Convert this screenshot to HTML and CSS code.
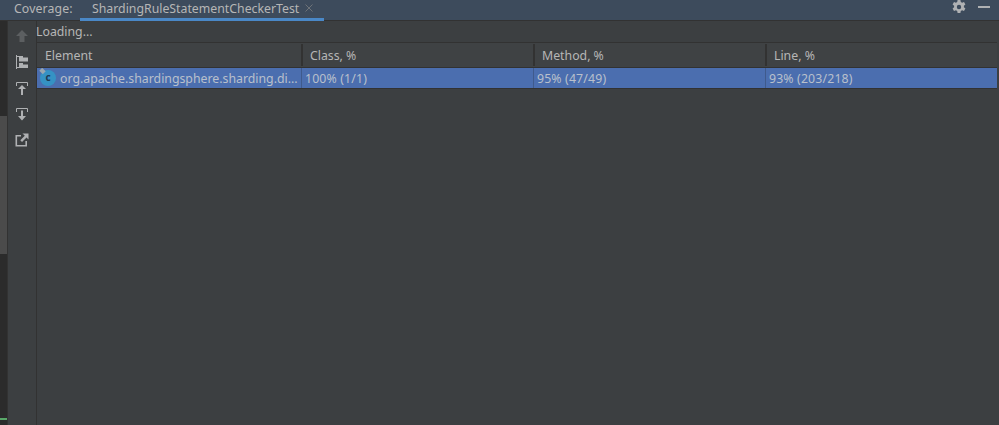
FILE: index.html
```html
<!DOCTYPE html>
<html lang="en">
<head>
  <meta charset="UTF-8" />
  <title>Coverage</title>
  <link rel="stylesheet" href="styles.css">
</head>
<body>
  <div class="tabbar">
    <span class="tool-title">Coverage:</span>
    <div class="tab">
      <span>ShardingRuleStatementCheckerTest</span>
      <svg class="tab-close" width="8" height="8" viewBox="0 0 8 8"><path d="M.5.5l7 7M7.5.5l-7 7" stroke="#6e7378" fill="none"/></svg>
    </div>
    <div class="tab-actions">
      <svg width="14" height="14" viewBox="0 0 14 14"><path fill="#afb1b3" fill-rule="evenodd" d="M5.600 0h2.800l.4 2 1.300.7 1.900-.7 1.400 2.400-1.500 1.300v1.600l1.500 1.300-1.400 2.400-1.900-.7-1.300.7-.4 2H5.600l-.4-2-1.300-.7-1.900.7L.6 8.600l1.500-1.300V5.700L.6 4.400 2 2l1.900.7 1.300-.7zM7 4.800a2.200 2.200 0 1 0 0 4.400 2.200 2.200 0 0 0 0-4.400z"/></svg>
      <span class="minimize"></span>
    </div>
  </div>
  <div class="body">
    <div class="gutter">
      <div class="thumb"></div>
      <div class="marker"></div>
    </div>
    <div class="toolbar">
      <svg width="14" height="14" viewBox="0 0 14 14"><path fill="#5c5f61" d="M7 1l6 6H9.500v6h-5V7H1z"/></svg>
      <svg width="14" height="14" viewBox="0 0 14 14"><path fill="none" stroke="#afb1b3" d="M1.500 0v14M1 1.500h3M1 12.500h3"/><path fill="#afb1b3" d="M4 1h4v1.500h5v4H4zM4 8h4v1.500h5v3.500H4z"/></svg>
      <svg width="14" height="14" viewBox="0 0 14 14"><path fill="none" stroke="#afb1b3" d="M1.500 5V1.500h11V5"/><path fill="#afb1b3" d="M7 4l4 4H8v6H6V8H3z"/></svg>
      <svg width="14" height="14" viewBox="0 0 14 14"><path fill="none" stroke="#afb1b3" d="M1.500 5V1.500h11V5"/><path fill="#afb1b3" d="M6 3.500h2V9h3l-4 4.500L3 9h3z"/></svg>
      <svg width="14" height="14" viewBox="0 0 14 14"><path fill="none" stroke="#afb1b3" stroke-width="1.600" d="M6 2.800H1.300v9.900h9.900V8"/><path fill="#afb1b3" d="M7.500.5H13.500v6l-2-2L7 9 5.300 7.300l4.500-4.500z"/></svg>
    </div>
    <div class="panel">
      <div class="status">Loading...</div>
      <div class="table">
        <div class="row head">
          <div class="cell first">Element</div>
          <div class="cell">Class, %</div>
          <div class="cell">Method, %</div>
          <div class="cell">Line, %</div>
        </div>
        <div class="row selected">
          <div class="cell first">
            <span class="class-icon">c</span>
            <span>org.apache.shardingsphere.sharding.di...</span>
          </div>
          <div class="cell value">100% (1/1)</div>
          <div class="cell value">95% (47/49)</div>
          <div class="cell value">93% (203/218)</div>
        </div>
      </div>
    </div>
  </div>
</body>
</html>
```

FILE: styles.css
```css
html, body {
  height: 100%;
}
body {
  margin: 0;
  display: flex;
  flex-direction: column;
  overflow: hidden;
  background: #3c3f41;
  color: #b6b6b6;
  font-family: "Noto Sans", sans-serif;
  font-size: 12.3px;
}

/* Tab bar */
.tabbar {
  height: 20px;
  flex: none;
  display: flex;
  align-items: flex-start;
  background: #3d4b5c;
  border-bottom: 1px solid #323232;
}
.tool-title {
  padding: 0 6px 0 14px;
  line-height: 17px;
  width: 60px;
  letter-spacing: 0.1px;
}
.tab {
  width: 244px;
  height: 21px;
  margin-bottom: -1px;
  box-sizing: border-box;
  padding-left: 12px;
  display: flex;
  align-items: flex-start;
  gap: 6px;
  line-height: 17px;
  border-bottom: 3px solid #4a88c7;
}
.tab-close {
  margin-top: 4px;
}
.tab-actions {
  margin-left: auto;
  padding: 0 9px 0 0;
  display: flex;
  align-items: center;
  gap: 12px;
}
.minimize {
  width: 12px;
  height: 2px;
  background: #afb1b3;
}

/* Main area */
.body {
  flex: 1;
  display: flex;
  min-height: 0;
}
.gutter {
  width: 7px;
  flex: none;
  display: flex;
  flex-direction: column;
  background: #2b2b2b;
  border-right: 1px solid #323232;
  padding-top: 95px;
}
.thumb {
  height: 138px;
  background: #4b4b4b;
}
.marker {
  height: 2px;
  margin-top: 164px;
  background: #59a869;
}
.toolbar {
  width: 28px;
  flex: none;
  display: flex;
  flex-direction: column;
  align-items: center;
  gap: 12px;
  padding-top: 8px;
  border-right: 1px solid #323232;
}
.panel {
  flex: 1;
  min-width: 0;
  display: flex;
  flex-direction: column;
}
.status {
  height: 21px;
  line-height: 21px;
  margin-left: -1px;
}
.table {
  flex: 1;
  margin-right: 2px;
  border-top: 1px solid #323232;
}
.row {
  display: grid;
  grid-template-columns: 264px 232px 232px 1fr;
}
.cell {
  padding-left: 7px;
  white-space: nowrap;
  overflow: hidden;
}
.head {
  height: 24px;
  background: #3f4244;
}
.head .cell {
  border-left: 2px solid #323232;
  margin: 1px 0;
  line-height: 24px;
}
.head .first {
  border-left: 0;
  padding-left: 8px;
}
.selected {
  height: 20px;
  line-height: 21px;
  background: #4b6eaf;
  border-top: 1px solid #323232;
  border-bottom: 1px solid #323232;
  color: #b9c0cc;
}
.selected .cell {
  border-left: 1px solid #3f5a8c;
  padding-left: 3px;
}
.selected .value {
  letter-spacing: 0.15px;
}
.selected .first {
  border-left: 0;
  padding-left: 3px;
  display: flex;
  align-items: center;
  gap: 4px;
}
.class-icon {
  position: relative;
  width: 16px;
  height: 16px;
  flex: none;
  border-radius: 50%;
  background: #3592c4;
  color: #1f3a52;
  font-size: 10px;
  font-weight: 700;
  line-height: 15px;
  text-align: center;
}
/* little pin on the class icon */
.class-icon::before {
  content: "";
  position: absolute;
  top: -1px;
  left: 0;
  width: 5px;
  height: 4px;
  background: #9aa7b0;
  transform: rotate(45deg);
}
```
